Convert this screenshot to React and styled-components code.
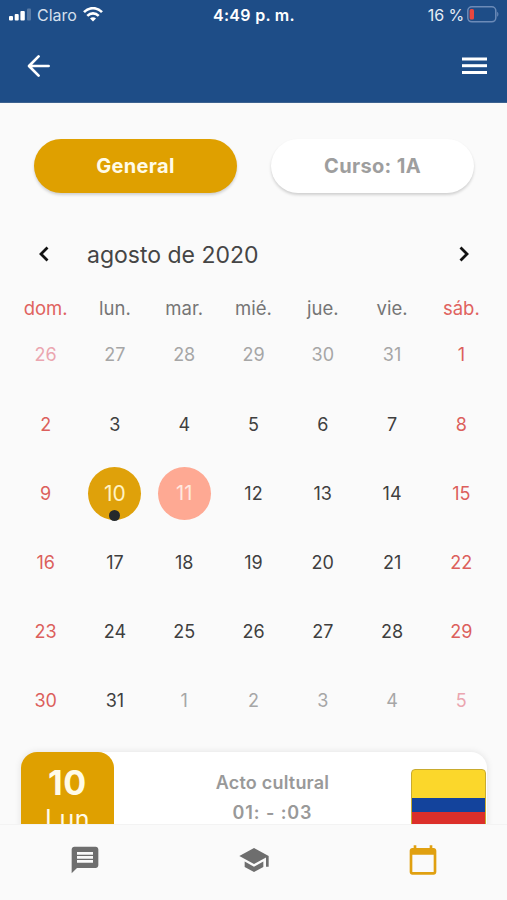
import React from 'react';
import styled, { createGlobalStyle } from 'styled-components';
import { MdMessage, MdSchool } from 'react-icons/md';

const GlobalStyle = createGlobalStyle`
  * {
    box-sizing: border-box;
  }

  body {
    margin: 0;
    background: #fafafa;
    font-family: Inter, 'Liberation Sans', sans-serif;
  }
`;

const weekdays = ['dom.', 'lun.', 'mar.', 'mié.', 'jue.', 'vie.', 'sáb.'];

// 42 celdas: del 26 de julio al 5 de septiembre
const days = Array.from({ length: 42 }, (_, i) => {
  const date = new Date(2020, 6, 26 + i);
  return {
    number: date.getDate(),
    outside: date.getMonth() !== 7,
    weekend: i % 7 === 0 || i % 7 === 6,
  };
});

const getMark = (day) => {
  if (day.outside) return null;
  if (day.number === 10) return 'selected';
  if (day.number === 11) return 'today';
  return null;
};

const StatusBar = () => (
  <Status>
    <Carrier>
      <svg width="22" height="13" viewBox="0 0 22 13" fill="#fff">
        <rect x="0" y="8" width="4" height="4.5" rx="1" />
        <rect x="5.7" y="6" width="4" height="6.5" rx="1" />
        <rect x="11.4" y="3" width="4.4" height="9.5" rx="1" />
        <rect x="18" y="0.5" width="4" height="12" rx="1" opacity="0.25" />
      </svg>
      <CarrierName>Claro</CarrierName>
      <svg width="20" height="15" viewBox="0 0 20 15" fill="none" stroke="#fff" strokeWidth="2.6">
        <path d="M1 5.2C6-0.2 14-0.2 19 5.2" />
        <path d="M4.3 8.8c3.3-3.3 8.1-3.3 11.4 0" />
        <path d="M10 14.6l-3-3.2c1.7-1.5 4.3-1.5 6 0z" fill="#fff" stroke="none" />
      </svg>
    </Carrier>
    <Clock>4:49 p. m.</Clock>
    <Battery>
      16 %
      <svg width="32" height="17" viewBox="0 0 32 17">
        <rect x="0.8" y="0.8" width="28" height="15" rx="4" fill="none" stroke="#6c8bb8" strokeWidth="1.5" />
        <rect x="2.6" y="3" width="4.4" height="10.6" rx="1.5" fill="#e8473f" />
        <path d="M30.2 5.8c1.6 .8 1.6 4.2 0 5z" fill="#6c8bb8" />
      </svg>
    </Battery>
  </Status>
);

const App = () => {
  return (
    <Screen>
      <GlobalStyle />
      <Header>
        <StatusBar />
        <Toolbar>
          <svg width="24" height="24" viewBox="0 0 24 24" fill="none" stroke="#fff" strokeWidth="2.7" strokeLinecap="round" strokeLinejoin="round">
            <path d="M21.6 12H2.5M11.6 2.4L2 12l9.6 9.6" />
          </svg>
          <svg width="25" height="18" viewBox="0 0 25 18" fill="#fff">
            <rect y="0.5" width="25" height="3" />
            <rect y="7.2" width="25" height="3" />
            <rect y="14" width="25" height="3" />
          </svg>
        </Toolbar>
      </Header>

      <Content>
        <Filters>
          <Pill $active>General</Pill>
          <Pill>Curso: 1A</Pill>
        </Filters>

        <MonthBar>
          <Chevron d="M9.5 2.5L3 9l6.5 6.5" />
          <Month>agosto de 2020</Month>
          <Chevron d="M2.5 2.5L9 9l-6.5 6.5" />
        </MonthBar>

        <Weekdays>
          {weekdays.map((name, i) => (
            <Weekday key={name} $weekend={i === 0 || i === 6}>{name}</Weekday>
          ))}
        </Weekdays>

        <Days>
          {days.map((day, i) => {
            const mark = getMark(day);
            return (
              <Day key={i} $outside={day.outside} $weekend={day.weekend}>
                {mark ? (
                  <Circle $mark={mark}>
                    {day.number}
                    {mark === 'selected' && <EventDot />}
                  </Circle>
                ) : (
                  day.number
                )}
              </Day>
            );
          })}
        </Days>

        <Event>
          <EventDate>
            <EventNumber>10</EventNumber>
            <EventDay>Lun</EventDay>
          </EventDate>
          <EventInfo>
            <EventTitle>Acto cultural</EventTitle>
            <EventTime>01: - :03</EventTime>
          </EventInfo>
          <Flag />
        </Event>
      </Content>

      <TabBar>
        <Tab><MdMessage size={32} /></Tab>
        <Tab><MdSchool size={32} /></Tab>
        <Tab $active>
          <svg width="32" height="32" viewBox="0 0 24 24" fill="currentColor">
            <path d="M20 3h-1V1h-2v2H7V1H5v2H4c-1.1 0-2 .9-2 2v16c0 1.1.9 2 2 2h16c1.1 0 2-.9 2-2V5c0-1.1-.9-2-2-2zm0 18H4V8h16v13z" />
          </svg>
        </Tab>
      </TabBar>
    </Screen>
  );
};

const Chevron = ({ d }) => (
  <svg width="12" height="18" viewBox="0 0 12 18" fill="none" stroke="#111" strokeWidth="2.8">
    <path d={d} />
  </svg>
);

const Screen = styled.div`
  display: flex;
  flex-direction: column;
  width: 507px;
  height: 900px;
  overflow: hidden;
  background: #fafafa;
`;

const Header = styled.header`
  flex: none;
  height: 103px;
  background: #1e4d87;
  border-bottom: 1px solid #3c6290;
  color: #fff;
`;

const Status = styled.div`
  display: grid;
  grid-template-columns: 1fr auto 1fr;
  align-items: center;
  height: 29px;
  padding: 0 8px 0 9px;
`;

const Carrier = styled.div`
  display: flex;
  align-items: center;
  gap: 6px;
`;

const CarrierName = styled.span`
  font-size: 16px;
  color: #d5e0ee;
`;

const Clock = styled.div`
  font-size: 16px;
  font-weight: 600;
  letter-spacing: 0.3px;
`;

const Battery = styled.div`
  display: flex;
  align-items: center;
  justify-content: flex-end;
  gap: 3px;
  font-size: 16px;
  letter-spacing: -0.1px;
  color: #e6edf5;
`;

const Toolbar = styled.div`
  display: flex;
  align-items: center;
  justify-content: space-between;
  height: 74px;
  padding: 0 20px 0 27px;
`;

const Content = styled.main`
  flex: 1;
  min-height: 0;
  overflow: hidden;
`;

const Filters = styled.div`
  display: grid;
  grid-template-columns: 1fr 1fr;
  gap: 34px;
  padding: 36px 33px 0 34px;
`;

const Pill = styled.button`
  height: 54px;
  padding: 0;
  border: 0;
  border-radius: 27px;
  background: ${({ $active }) => ($active ? '#dfa000' : '#fff')};
  color: ${({ $active }) => ($active ? '#fffbe8' : '#9e9e9e')};
  box-shadow: 0 2px 3px rgba(0, 0, 0, 0.17);
  font-family: inherit;
  font-size: 20px;
  font-weight: 700;
  letter-spacing: 0.35px;
`;

const MonthBar = styled.div`
  display: flex;
  align-items: center;
  height: 30px;
  margin-top: 46px;
  padding: 0 37px 0 38px;
`;

const Month = styled.div`
  flex: 1;
  padding: 1px 0 0 37px;
  color: #454545;
  font-size: 23px;
`;

const Weekdays = styled.div`
  display: grid;
  grid-template-columns: repeat(7, 1fr);
  height: 24px;
  margin: 27px 11px 0;
`;

const Weekday = styled.div`
  color: ${({ $weekend }) => ($weekend ? '#e0635f' : '#757575')};
  font-size: 18.5px;
  line-height: 24px;
  text-align: center;
`;

const dayColor = ({ $outside, $weekend }) => {
  if ($outside) return $weekend ? '#eba6b0' : '#a6a6a6';
  return $weekend ? '#dc5f5c' : '#3f3f3f';
};

const Days = styled.div`
  display: grid;
  grid-template-columns: repeat(7, 1fr);
  grid-auto-rows: 69.1px;
  margin: 0.4px 11px 0;
`;

const Day = styled.div`
  display: flex;
  align-items: center;
  justify-content: center;
  color: ${dayColor};
  font-size: 18px;
`;

const Circle = styled.div`
  position: relative;
  display: flex;
  align-items: center;
  justify-content: center;
  width: 53px;
  height: 53px;
  border-radius: 50%;
  background: ${({ $mark }) => ($mark === 'selected' ? '#dfa10a' : '#fea993')};
  color: ${({ $mark }) => ($mark === 'selected' ? '#fff3c4' : '#ffe9e0')};
  font-size: ${({ $mark }) => ($mark === 'selected' ? '21px' : '20px')};
`;

const EventDot = styled.span`
  position: absolute;
  bottom: -1px;
  left: 21px;
  width: 11px;
  height: 11px;
  border-radius: 50%;
  background: #25292b;
`;

const Event = styled.section`
  display: flex;
  height: 110px;
  margin: 17px 20px 0 21px;
  border-radius: 16px;
  background: #fff;
  box-shadow: 0 0 7px rgba(0, 0, 0, 0.1);
`;

const EventDate = styled.div`
  display: flex;
  flex-direction: column;
  align-items: center;
  width: 93px;
  padding-top: 11px;
  border-radius: 16px;
  background: #dfa000;
  color: #fffbe8;
`;

const EventNumber = styled.div`
  font-size: 34px;
  font-weight: 700;
  letter-spacing: 0.8px;
  line-height: 40px;
`;

const EventDay = styled.div`
  font-size: 25px;
  line-height: 32px;
  letter-spacing: 0.5px;
`;

const EventInfo = styled.div`
  display: flex;
  flex: 1;
  flex-direction: column;
  align-items: center;
  padding: 16px 0 0 20px;
  color: #999;
  font-size: 18px;
  font-weight: 600;
  line-height: 30px;
`;

const EventTitle = styled.span`
  letter-spacing: 0.2px;
`;

const EventTime = styled.span`
  letter-spacing: 0.9px;
`;

const Flag = styled.div`
  width: 75px;
  height: 76px;
  margin: 17px 1px 0 0;
  border: 1px solid #c9ab2e;
  border-radius: 4px;
  background: linear-gradient(#fbd72b 28px, #13439c 28px 42px, #dc2f2a 42px);
`;

const TabBar = styled.nav`
  display: grid;
  flex: none;
  grid-template-columns: repeat(3, 1fr);
  height: 76px;
  border-top: 1px solid #f3f3f3;
  background: #fafafa;
`;

const Tab = styled.div`
  display: flex;
  align-items: center;
  justify-content: center;
  padding-bottom: 5px;
  color: ${({ $active }) => ($active ? '#e0a010' : '#6e6e6e')};
`;

export default App;
